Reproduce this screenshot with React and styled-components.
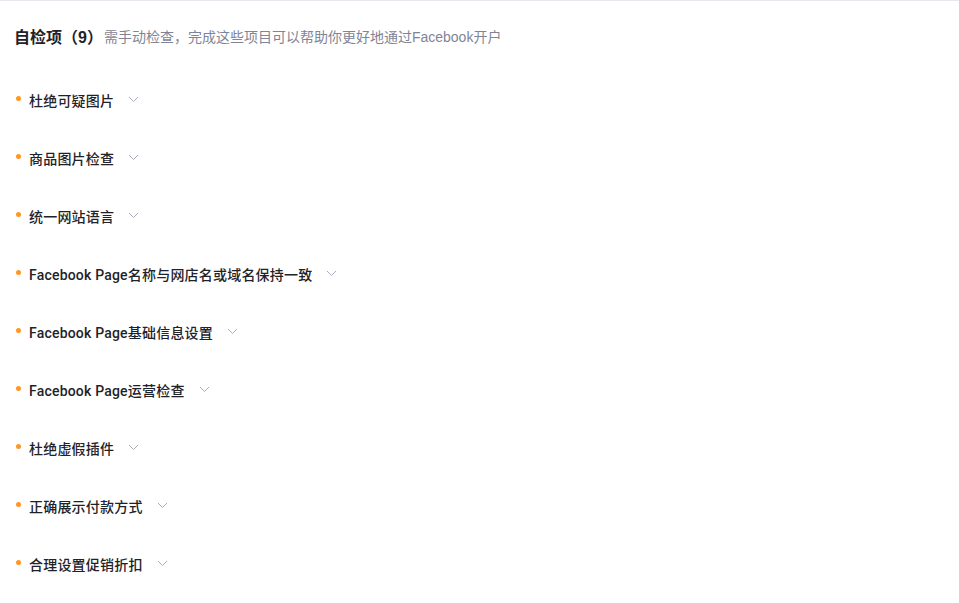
import React from 'react'
import styled, { createGlobalStyle } from 'styled-components'

const GlobalStyle = createGlobalStyle`
  body {
    margin: 0;
    background: #fff;
    font-family: "Liberation Sans", "Noto Sans CJK SC", sans-serif;
  }
`

const Panel = styled.div`
  border-top: 1px solid #e6e8ed;
  padding: 23px 14px 0 14px;
  height: 579px;
  box-sizing: border-box;
`

const Header = styled.div`
  display: flex;
  align-items: center;
  height: 24px;
`

const Title = styled.span`
  font-size: 16px;
  font-weight: 700;
  color: #1f2329;
`

const Hint = styled.span`
  font-size: 14px;
  color: #7f8596;
  margin-left: 1px;
`

const List = styled.ul`
  list-style: none;
  margin: 23px 0 0 0;
  padding: 0 0 0 2px;
`

const Item = styled.li`
  display: flex;
  align-items: center;
  height: 58px;
`

const Dot = styled.span`
  width: 5px;
  height: 5px;
  border-radius: 50%;
  background: #ff9626;
  margin-right: 8px;
  margin-top: -3px;
`

const Label = styled.span`
  font-family: Roboto, "Noto Sans CJK SC", sans-serif;
  font-size: 14px;
  font-weight: 500;
  letter-spacing: 0.2px;
  color: #1f2329;
`

const Chevron = styled.svg`
  margin-left: 14px;
  margin-top: -1px;
`

const items = [
  '杜绝可疑图片',
  '商品图片检查',
  '统一网站语言',
  'Facebook Page名称与网店名或域名保持一致',
  'Facebook Page基础信息设置',
  'Facebook Page运营检查',
  '杜绝虚假插件',
  '正确展示付款方式',
  '合理设置促销折扣',
]

export default function App() {
  return (
    <>
      <GlobalStyle />
      <Panel>
        <Header>
          <Title>自检项（9）</Title>
          <Hint>需手动检查，完成这些项目可以帮助你更好地通过Facebook开户</Hint>
        </Header>
        <List>
          {items.map(text => (
            <Item key={text}>
              <Dot />
              <Label>{text}</Label>
              <Chevron width="11" height="7" viewBox="0 0 11 7">
                <path d="M1 1 L5.5 5.5 L10 1" fill="none" stroke="#a9aebb" strokeWidth="1" />
              </Chevron>
            </Item>
          ))}
        </List>
      </Panel>
    </>
  )
}
